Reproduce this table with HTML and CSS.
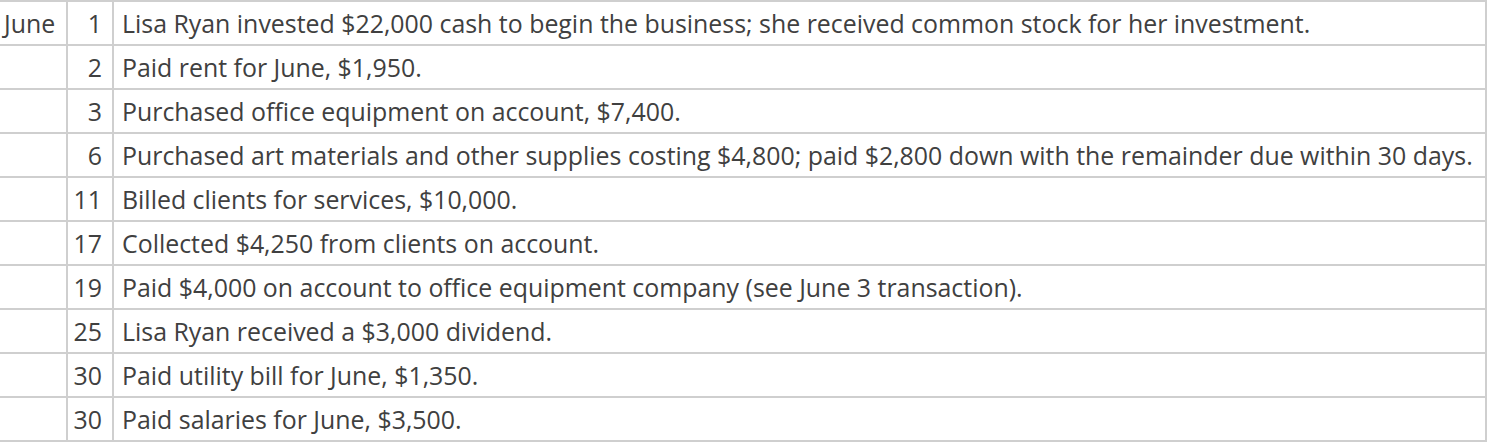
FILE: index.html
```html
<!DOCTYPE html>
<html>
<head>
<meta charset="utf-8">
<link rel="stylesheet" href="styles.css">
</head>
<body>
<table class="ledger">
  <tr><td class="month">June</td><td class="day">1</td><td class="desc">Lisa Ryan invested $22,000 cash to begin the business; she received common stock for her investment.</td></tr>
  <tr><td class="month"></td><td class="day">2</td><td class="desc">Paid rent for June, $1,950.</td></tr>
  <tr><td class="month"></td><td class="day">3</td><td class="desc">Purchased office equipment on account, $7,400.</td></tr>
  <tr><td class="month"></td><td class="day">6</td><td class="desc">Purchased art materials and other supplies costing $4,800; paid $2,800 down with the remainder due within 30 days.</td></tr>
  <tr><td class="month"></td><td class="day">11</td><td class="desc">Billed clients for services, $10,000.</td></tr>
  <tr><td class="month"></td><td class="day">17</td><td class="desc">Collected $4,250 from clients on account.</td></tr>
  <tr><td class="month"></td><td class="day">19</td><td class="desc">Paid $4,000 on account to office equipment company (see June 3 transaction).</td></tr>
  <tr><td class="month"></td><td class="day">25</td><td class="desc">Lisa Ryan received a $3,000 dividend.</td></tr>
  <tr><td class="month"></td><td class="day">30</td><td class="desc">Paid utility bill for June, $1,350.</td></tr>
  <tr><td class="month"></td><td class="day">30</td><td class="desc">Paid salaries for June, $3,500.</td></tr>
</table>
</body>
</html>
```
FILE: styles.css
```css
html, body {
  margin: 0;
  padding: 0;
  background: #fff;
}
.ledger {
  border-collapse: separate;
  border-spacing: 0;
  table-layout: fixed;
  width: 1487px;
  border-top: 2px solid #cfcfcf;
  font-family: "Open Sans", sans-serif;
  font-size: 24.9px;
  font-weight: 400;
  color: #404040;
}
.ledger td {
  height: 41px;
  padding: 1px 0 0 0;
  border-right: 2px solid #cfcfcf;
  border-bottom: 2px solid #cfcfcf;
  vertical-align: middle;
  white-space: nowrap;
  box-sizing: content-box;
  line-height: 41px;
}
.ledger .month {
  width: 62px;
  padding-left: 4px;
}
.ledger .day {
  width: 34px;
  padding-right: 10px;
  text-align: right;
}
.ledger .desc {
  width: 1363px;
  padding-left: 8px;
}
```
